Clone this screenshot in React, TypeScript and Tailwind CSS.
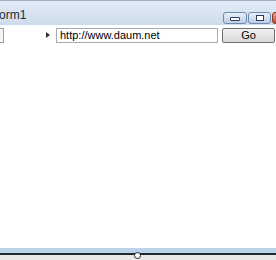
import React from 'react';

const App = () => {
  return (
    <div className="relative w-[276px] h-[260px] bg-white overflow-hidden" style={{ fontFamily: '"Liberation Sans", Arial, sans-serif' }}>
      {/* Title bar */}
      <div className="h-[25px] border-t border-[#9fb0c4] bg-gradient-to-b from-[#e3ecf6] to-[#cddcec] flex items-start">
        <div className="text-[12px] text-[#1e2a3a] mt-[8px] ml-[-1px] leading-none">orm1</div>
        <div className="ml-auto flex gap-[1px] mt-[11px] mr-[-4px]">
          <div className="w-[24px] h-[12px] rounded-[3px] border border-[#6f8bab] bg-gradient-to-b from-[#e8f0f8] to-[#bccfe4] flex items-center justify-center">
            <div className="w-[10px] h-[4px] border border-[#2b3f58] rounded-[1px] bg-white mt-[2px]" />
          </div>
          <div className="w-[23px] h-[12px] rounded-[3px] border border-[#6f8bab] bg-gradient-to-b from-[#e8f0f8] to-[#bccfe4] flex items-center justify-center">
            <div className="w-[8px] h-[6px] border border-[#2b3f58] bg-white" />
          </div>
          <div className="w-[8px] h-[12px] rounded-l-[3px] border border-[#8a3a2a] bg-gradient-to-b from-[#e8a08e] to-[#c4452c]" />
        </div>
      </div>

      {/* Toolbar row */}
      <div className="flex items-center h-[16px] mt-[2px]">
        <div className="w-[4px] h-[15px] border border-l-0 border-[#a0a0a0] bg-[#f4f4f4]" />
        <div className="w-[52px] flex justify-end pr-[6px]">
          <svg width="4" height="6" viewBox="0 0 4 6"><path d="M0 0 L4 3 L0 6 Z" fill="#333" /></svg>
        </div>
        <div className="w-[162px] h-[15px] border border-[#a5acb5] bg-white text-[11px] leading-[13px] pl-[3px] text-black">http://www.daum.net</div>
        <div className="ml-[4px] w-[53px] h-[15px] border border-[#707070] rounded-[2px] bg-gradient-to-b from-[#f2f2f2] to-[#d8d8d8] text-[11px] leading-[13px] text-center text-black">Go</div>
      </div>

      {/* Bottom splitter */}
      <div className="absolute left-0 right-0 top-[248px]">
        <div className="h-[5px] bg-[#bcd2ea]" />
        <div className="h-[2px] bg-[#1e2a30]" />
        <div className="h-[5px] bg-[#e6e8ea]" />
        <div className="absolute left-[134px] top-[4px] w-[7px] h-[7px] rounded-full border-[1.5px] border-[#222] bg-white" />
      </div>
    </div>
  );
};

export default App;
